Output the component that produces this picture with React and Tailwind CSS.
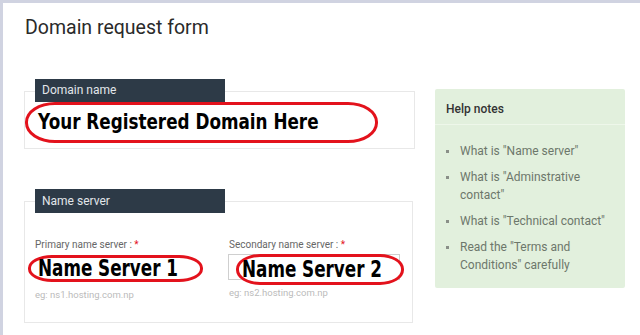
import React from 'react';

const helpNotes = [
  ['What is "Name server"'],
  ['What is "Adminstrative', 'contact"'],
  ['What is "Technical contact"'],
  ['Read the "Terms and', 'Conditions" carefully'],
];

const SectionHeader = ({ children }) => (
  <div className="relative z-10 ml-[10px] -mt-[13px] w-[190px] h-[23px] bg-[#2d3a47] text-[#e2e6ea] text-[12px] leading-[23px] pl-[7px]">
    {children}
  </div>
);

const markerFont = { fontFamily: '"DejaVu Sans", sans-serif' };

const App = () => {
  return (
    <div
      className="w-[640px] h-[335px] overflow-hidden bg-white border-t-[3px] border-l-[3px] border-[#d0d3e1]"
      style={{ fontFamily: 'Roboto, "Liberation Sans", sans-serif' }}
    >
      <h1 className="ml-[22px] mt-[13px] text-[19.5px] leading-[24px] text-[#2a2a2a]">
        Domain request form
      </h1>

      <div className="flex">
        {/* Left column */}
        <div className="ml-[21px] w-[391px]">
          {/* Domain name */}
          <div className="mt-[51px] h-[58px] border border-[#e8e8e8]">
            <SectionHeader>Domain name</SectionHeader>
            <div className="w-[353px] h-[41px] border-[3px] border-[#e3121c] rounded-[30px/20px] flex items-center pl-[10px]">
              <span className="inline-block origin-left [transform:scaleX(0.82)] text-[20.5px] font-bold text-black whitespace-nowrap" style={markerFont}>
                Your Registered Domain Here
              </span>
            </div>
          </div>

          {/* Name server */}
          <div className="mt-[52px] w-[389px] h-[122px] border border-[#e8e8e8]">
            <div className="relative z-10 ml-[10px] -mt-[13px] w-[190px] h-[24px] bg-[#2d3a47] text-[#e2e6ea] text-[12px] leading-[24px] pl-[7px]">
              Name server
            </div>
            <div className="flex pl-[3px] mt-[24px]">
              <div className="w-[201px]">
                <div className="ml-[7px] text-[10px] leading-[16px] text-[#666] whitespace-nowrap">
                  Primary name server : <span className="text-[#e3121c]">*</span>
                </div>
                <div className="mt-[2px] w-[175px] h-[27px] border-[3px] border-[#e3121c] rounded-[24px/13px] flex items-center pl-[7px]">
                  <span className="inline-block origin-left [transform:scaleX(0.73)] text-[23px] font-bold text-black leading-none whitespace-nowrap" style={markerFont}>
                    Name Server 1
                  </span>
                </div>
                <div className="ml-[7px] mt-[6px] text-[9.5px] leading-[14px] text-[#bbb]">
                  eg: ns1.hosting.com.np
                </div>
              </div>
              <div className="w-[185px]">
                <div className="ml-[1px] text-[10px] leading-[16px] text-[#666] whitespace-nowrap">
                  Secondary name server : <span className="text-[#e3121c]">*</span>
                </div>
                <div className="relative mt-[1px] h-[31px]">
                  <div className="mt-[1px] w-[172px] h-[26px] border border-[#cfcfcf]" />
                  <div className="absolute left-[8px] top-0 w-[168px] h-[31px] border-[3px] border-[#e3121c] rounded-[24px/15px] bg-white flex items-center pl-[3px]">
                    <span className="inline-block origin-left [transform:scaleX(0.73)] text-[23px] font-bold text-black leading-none whitespace-nowrap" style={markerFont}>
                      Name Server 2
                    </span>
                  </div>
                </div>
                <div className="ml-[1px] mt-[1px] text-[9.5px] leading-[14px] text-[#bbb]">
                  eg: ns2.hosting.com.np
                </div>
              </div>
            </div>
          </div>
        </div>

        {/* Help notes */}
        <div className="ml-[20px] mt-[49px] w-[190px] h-[199px] bg-[#e2f0dd] rounded-[2px]">
          <div className="h-[36px] pl-[11px] text-[12px] font-medium leading-[40px] text-[#333] border-b border-[#eef7ea]">
            Help notes
          </div>
          <ul className="pt-[17px] pl-[11px] flex flex-col gap-[8px]">
            {helpNotes.map((lines, i) => (
              <li key={i} className="flex text-[12px] leading-[18px] text-[#6d776b]">
                <span className="mt-[8px] w-[3px] h-[3px] bg-[#8a8f88] shrink-0" />
                <span className="ml-[11px] whitespace-nowrap">
                  {lines.map((l, j) => (
                    <div key={j}>{l}</div>
                  ))}
                </span>
              </li>
            ))}
          </ul>
        </div>
      </div>
    </div>
  );
};

export default App;
